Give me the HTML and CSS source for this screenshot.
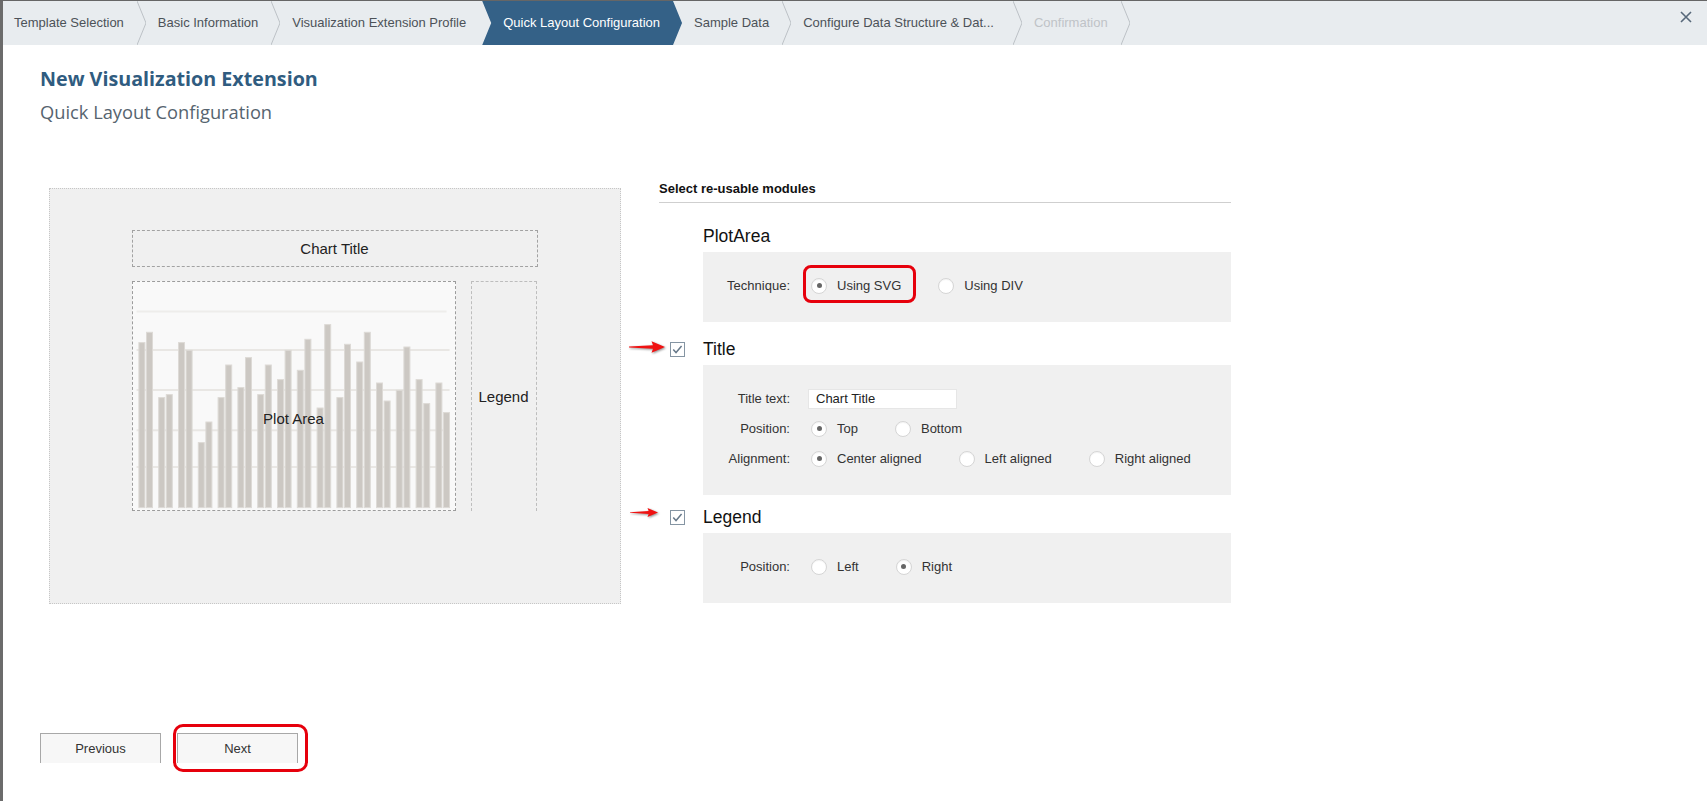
FILE: index.html
```html
<!DOCTYPE html>
<html lang="en">
<head>
<meta charset="utf-8">
<title>New Visualization Extension</title>
<link rel="stylesheet" href="styles.css">
</head>
<body>
<div class="app">
  <div class="edge"></div>
  <div class="main">
    <nav class="crumbs">
      <div class="crumb first">Template Selection</div>
      <svg class="sep" viewBox="0 0 9 44"><polyline points="0,0 9,22 0,44"/></svg>
      <div class="crumb">Basic Information</div>
      <svg class="sep" viewBox="0 0 9 44"><polyline points="0,0 9,22 0,44"/></svg>
      <div class="crumb wide">Visualization Extension Profile</div>
      <div class="crumb active">Quick Layout Configuration</div>
      <div class="crumb">Sample Data</div>
      <svg class="sep" viewBox="0 0 9 44"><polyline points="0,0 9,22 0,44"/></svg>
      <div class="crumb long">Configure Data Structure &amp; Dat...</div>
      <svg class="sep" viewBox="0 0 9 44"><polyline points="0,0 9,22 0,44"/></svg>
      <div class="crumb disabled">Confirmation</div>
      <svg class="sep" viewBox="0 0 9 44"><polyline points="0,0 9,22 0,44"/></svg>
      <button class="close" aria-label="Close"><svg viewBox="0 0 12 12"><path d="M1 1 L11 11 M11 1 L1 11"/></svg></button>
    </nav>

    <div class="page">
      <header class="head">
        <h1 class="title">New Visualization Extension</h1>
        <h2 class="subtitle">Quick Layout Configuration</h2>
      </header>

      <section class="workspace">
        <div class="preview">
          <div class="chart">
            <div class="chart-title">Chart Title</div>
            <div class="chart-row">
              <div class="plot">
                <svg class="bars" viewBox="0 0 322 228" width="322" height="228">
                  <g class="grid">
                    <line class="g0" x1="3.6" y1="29.6" x2="313.6" y2="29.6"/>
                    <line x1="3.6" y1="68" x2="316.6" y2="68"/>
                    <line x1="3.6" y1="108" x2="316.6" y2="108"/>
                    <line x1="3.6" y1="148.3" x2="316.6" y2="148.3"/>
                    <line x1="3.6" y1="185" x2="316.6" y2="185"/>
                  </g>
                  <g class="bar">
                    <rect x="5.9" y="60.6" width="6" height="165"/>
                    <rect x="13.5" y="50.3" width="6" height="175.3"/>
                    <rect x="25.7" y="115.6" width="6" height="110"/>
                    <rect x="33.3" y="112.6" width="6" height="113"/>
                    <rect x="45.5" y="60.6" width="6" height="165"/>
                    <rect x="53.1" y="68.3" width="6" height="157.3"/>
                    <rect x="65.3" y="160.6" width="6" height="65"/>
                    <rect x="72.9" y="140" width="6" height="85.6"/>
                    <rect x="85.1" y="115.6" width="6" height="110"/>
                    <rect x="92.7" y="83" width="6" height="142.6"/>
                    <rect x="104.9" y="105.6" width="6" height="120"/>
                    <rect x="112.5" y="75.6" width="6" height="150"/>
                    <rect x="124.7" y="112.6" width="6" height="113"/>
                    <rect x="132.3" y="83" width="6" height="142.6"/>
                    <rect x="144.5" y="97.6" width="6" height="128"/>
                    <rect x="152.1" y="68.3" width="6" height="157.3"/>
                    <rect x="164.3" y="88.3" width="6" height="137.3"/>
                    <rect x="171.9" y="57.3" width="6" height="168.3"/>
                    <rect x="184.1" y="126" width="6" height="99.6"/>
                    <rect x="191.7" y="42.6" width="6" height="183"/>
                    <rect x="203.9" y="115.6" width="6" height="110"/>
                    <rect x="211.5" y="62.3" width="6" height="163.3"/>
                    <rect x="223.7" y="80" width="6" height="145.6"/>
                    <rect x="231.3" y="50.3" width="6" height="175.3"/>
                    <rect x="243.5" y="101" width="6" height="124.6"/>
                    <rect x="251.1" y="119" width="6" height="106.6"/>
                    <rect x="263.3" y="108.3" width="6" height="117.3"/>
                    <rect x="270.9" y="65" width="6" height="160.6"/>
                    <rect x="283.1" y="97.6" width="6" height="128"/>
                    <rect x="290.7" y="121.6" width="6" height="104"/>
                    <rect x="302.9" y="101" width="6" height="124.6"/>
                    <rect x="310.5" y="130.6" width="6" height="95"/>
                  </g>
                </svg>
                <span class="plot-label">Plot Area</span>
              </div>
              <div class="legend-box">Legend</div>
            </div>
          </div>
        </div>

        <div class="modules">
          <div class="modules-header">Select re-usable modules</div>

          <div class="module">
            <div class="module-head plain"><span class="mod-title">PlotArea</span></div>
            <div class="panel">
              <div class="row">
                <span class="lbl">Technique:</span>
                <div class="ctrls">
                  <label class="opt"><span class="radio on"></span><span class="txt">Using SVG</span><span class="ring"></span></label>
                  <label class="opt"><span class="radio"></span><span class="txt">Using DIV</span></label>
                </div>
              </div>
            </div>
          </div>

          <div class="module m-title">
            <div class="module-head">
              <svg class="pointer" viewBox="0 0 36 14" width="36" height="14"><path d="M0 6.6 L24 5.2 L22.5 1.3 L36 7 L22.5 12.7 L24 8.8 L0 7.4 Z"/></svg>
              <span class="check"><svg viewBox="0 0 15 15"><path d="M2.6 7.4 L5.8 11 L12.2 3.4"/></svg></span>
              <span class="mod-title">Title</span>
            </div>
            <div class="panel">
              <div class="row">
                <span class="lbl">Title text:</span>
                <div class="ctrls"><input class="field" type="text" value="Chart Title"></div>
              </div>
              <div class="row">
                <span class="lbl">Position:</span>
                <div class="ctrls">
                  <label class="opt"><span class="radio on"></span><span class="txt">Top</span></label>
                  <label class="opt"><span class="radio"></span><span class="txt">Bottom</span></label>
                </div>
              </div>
              <div class="row">
                <span class="lbl">Alignment:</span>
                <div class="ctrls">
                  <label class="opt"><span class="radio on"></span><span class="txt">Center aligned</span></label>
                  <label class="opt"><span class="radio"></span><span class="txt">Left aligned</span></label>
                  <label class="opt"><span class="radio"></span><span class="txt">Right aligned</span></label>
                </div>
              </div>
            </div>
          </div>

          <div class="module m-legend">
            <div class="module-head">
              <svg class="pointer small" viewBox="0 0 36 14" width="28" height="11"><path d="M0 6.6 L24 5.2 L22.5 1.3 L36 7 L22.5 12.7 L24 8.8 L0 7.4 Z"/></svg>
              <span class="check"><svg viewBox="0 0 15 15"><path d="M2.6 7.4 L5.8 11 L12.2 3.4"/></svg></span>
              <span class="mod-title">Legend</span>
            </div>
            <div class="panel">
              <div class="row">
                <span class="lbl">Position:</span>
                <div class="ctrls">
                  <label class="opt"><span class="radio"></span><span class="txt">Left</span></label>
                  <label class="opt"><span class="radio on"></span><span class="txt">Right</span></label>
                </div>
              </div>
            </div>
          </div>
        </div>
      </section>

      <footer class="actions">
        <button class="btn">Previous</button>
        <button class="btn next">Next<span class="ring btn-ring"></span></button>
      </footer>
    </div>
  </div>
</div>
</body>
</html>
```

FILE: styles.css
```css
* { box-sizing: border-box; }

html, body {
  margin: 0;
  padding: 0;
  background: #fff;
}

body {
  font-family: "Liberation Sans", Arial, sans-serif;
  font-size: 13px;
  color: #333;
  overflow: hidden;
}

.app {
  display: flex;
  height: 801px;
  border-top: 1px solid #666;
}

.edge {
  width: 3px;
  flex: none;
  background: #6b6b6b;
}

.main {
  flex: 1;
  min-width: 0;
}

/* breadcrumb */
.crumbs {
  display: flex;
  height: 44px;
  background: #e8ecef;
  font-size: 13px;
  line-height: 44px;
  color: #4c5258;
}

.crumb {
  padding: 0 13px 0 12px;
  white-space: nowrap;
  flex: none;
}

.crumb.first { padding-left: 11px; }
.crumb.wide { padding-right: 16px; }
.crumb.long { padding-right: 19px; }

.crumb.active {
  padding: 0 22px 0 21px;
  background: #346187;
  color: #fff;
  clip-path: polygon(0 0, calc(100% - 9px) 0, 100% 50%, calc(100% - 9px) 100%, 0 100%, 9px 50%);
}

.crumb.disabled { color: #bfc3c7; }

.sep {
  width: 9px;
  height: 44px;
  flex: none;
}

.sep polyline {
  fill: none;
  stroke: #bcc1c6;
  stroke-width: 1;
}

.close {
  margin: 10px 15px 0 auto;
  width: 12px;
  height: 12px;
  padding: 0;
  border: 0;
  background: none;
  flex: none;
}

.close svg {
  display: block;
  width: 12px;
  height: 12px;
}

.close path {
  stroke: #57687a;
  stroke-width: 1.6;
  fill: none;
}

/* page */
.page {
  padding: 22px 0 0 37px;
}

.title {
  margin: 0;
  font-family: "Open Sans", "Liberation Sans", sans-serif;
  font-weight: 700;
  font-size: 19.7px;
  line-height: 24px;
  color: #305c80;
}

.subtitle {
  margin: 10px 0 0;
  font-family: "Open Sans", "Liberation Sans", sans-serif;
  font-weight: 400;
  font-size: 18.3px;
  line-height: 22px;
  color: #56646f;
}

.workspace {
  display: flex;
  align-items: flex-start;
  gap: 38px;
  margin: 57px 0 0 9px;
}

/* preview */
.preview {
  width: 572px;
  height: 416px;
  margin-top: 8px;
  padding: 41px 0 0 81.5px;
  background: #f0f0f0;
  border: 1px dotted #c6c6c6;
  flex: none;
}

.chart {
  width: 406px;
  font-size: 15px;
  color: #222;
}

.chart-title {
  height: 37px;
  border: 1px dashed #a2a2a2;
  display: flex;
  align-items: center;
  justify-content: center;
  margin-bottom: 14px;
}

.chart-row {
  display: flex;
  gap: 15px;
}

.plot {
  position: relative;
  width: 324px;
  height: 230px;
  border: 1px dashed #9c9c9c;
  background: #f9f9f9;
}

.bars {
  display: block;
}

.grid line {
  stroke: #e9e7e4;
  stroke-width: 2;
}

.grid line.g0 { stroke: #eeedeb; }

.bar rect {
  fill: #ccc8c3;
  stroke: #dddad6;
  stroke-width: 1;
}

.plot-label {
  position: absolute;
  left: 0;
  right: 0;
  top: 128px;
  text-align: center;
  line-height: 18px;
}

.legend-box {
  width: 66px;
  height: 230px;
  border: 1px dashed #bdbdbd;
  border-bottom: 0;
  display: flex;
  align-items: center;
  justify-content: center;
}

/* modules */
.modules {
  width: 572px;
  flex: none;
}

.modules-header {
  font-weight: bold;
  font-size: 13px;
  line-height: 18px;
  color: #111;
  padding-bottom: 4px;
  border-bottom: 1px solid #cfcfcf;
}

.module { margin-top: 18.5px; }
.module.m-title { margin-top: 13px; }
.module.m-legend { margin-top: 8px; }

.module-head {
  position: relative;
  display: flex;
  align-items: center;
  height: 30px;
  padding-left: 10.5px;
}

.module-head.plain { padding-left: 44px; }

.mod-title {
  font-size: 17.5px;
  color: #111;
}

.check {
  width: 15px;
  height: 15px;
  margin-right: 18.5px;
  border: 1px solid #8595a3;
  background: #fff;
  display: block;
}

.check svg {
  display: block;
  width: 13px;
  height: 13px;
}

.check path {
  fill: none;
  stroke: #67798a;
  stroke-width: 1.7;
}

.pointer {
  position: absolute;
  left: -30.5px;
  top: 5px;
  filter: drop-shadow(1px 1.5px 1px rgba(0, 0, 0, 0.45));
}

.pointer path { fill: #f01212; }

.pointer.small {
  left: -29px;
  top: 4.5px;
}

.panel {
  margin-left: 44px;
  background: #f0f0f0;
  padding: 19px 0 21px;
}

.row {
  display: flex;
  align-items: center;
  height: 30px;
}

.lbl {
  width: 87px;
  text-align: right;
  color: #333;
  flex: none;
}

.ctrls {
  display: flex;
  align-items: center;
  margin-left: 18px;
}

.opt {
  position: relative;
  display: flex;
  align-items: center;
  height: 20px;
  margin-left: 3px;
  color: #333;
}

.opt + .opt { margin-left: 37px; }

.radio {
  width: 16px;
  height: 16px;
  border-radius: 50%;
  background: #fff;
  border: 1px solid #d5d5d5;
  box-shadow: inset 0 1px 1px rgba(0, 0, 0, 0.05);
  display: flex;
  align-items: center;
  justify-content: center;
  flex: none;
}

.radio.on::after {
  content: "";
  width: 5px;
  height: 5px;
  border-radius: 50%;
  background: #666;
}

.txt { margin-left: 10px; white-space: nowrap; }

.ring {
  position: absolute;
  left: -8.5px;
  right: -14.5px;
  top: -10.5px;
  bottom: -7.5px;
  border: 3px solid #e6000c;
  border-radius: 8px;
  pointer-events: none;
}

.field {
  width: 149px;
  height: 20px;
  border: 1px solid #e6e6e6;
  background: #fff;
  padding: 0 0 0 7px;
  font-family: "Liberation Sans", Arial, sans-serif;
  font-size: 13px;
  color: #222;
  outline: none;
}

/* footer */
.actions {
  display: flex;
  gap: 16px;
  margin-top: 129px;
}

.btn {
  position: relative;
  width: 121px;
  height: 30px;
  padding: 0;
  background: #f7f7f7;
  border: 1px solid #a8a8a8;
  border-bottom: 0;
  font-family: "Liberation Sans", Arial, sans-serif;
  font-size: 13px;
  color: #333;
}

.btn-ring {
  left: -5px;
  right: -11px;
  top: -10px;
  bottom: -9px;
  border-width: 3.5px;
  border-radius: 10px;
}
```
